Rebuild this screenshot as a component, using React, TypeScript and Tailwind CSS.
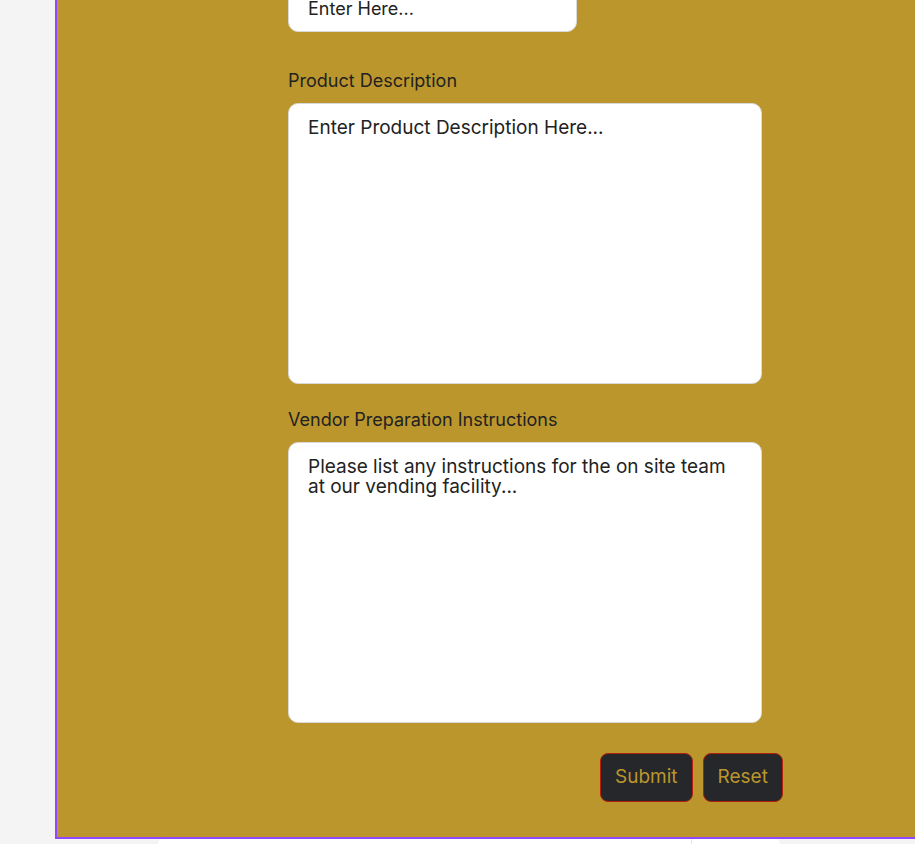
export default function App() {
  return (
    <div
      className="w-[915px] h-[844px] overflow-hidden bg-[#f4f4f4] flex"
      style={{ fontFamily: "Inter, 'Noto Sans', sans-serif" }}
    >
      <div className="w-[55px] shrink-0" />
      <div className="flex-1 flex flex-col">
        <div className="border-l-2 border-b-2 border-[#9147ff] bg-[#bb962c] pl-[231px] pb-[35px]">
          <form className="w-[474px] flex flex-col -mt-[15px]">
            <input
              type="text"
              placeholder="Enter Here..."
              className="w-[289px] h-[47px] rounded-[10px] border border-[#d9d9d9] bg-white px-[19px] text-[18px] text-[#222] placeholder:text-[#222] outline-none"
            />
            <label className="mt-[35px] text-[18px] leading-[27px] text-[#222]">Product Description</label>
            <textarea
              placeholder="Enter Product Description Here..."
              className="mt-[9px] h-[281px] resize-none rounded-[10px] border border-[#d9d9d9] bg-white px-[19px] pt-[14px] text-[19px] leading-[20px] text-[#222] placeholder:text-[#222] outline-none"
            />
            <label className="mt-[22px] text-[18px] leading-[27px] text-[#222]">Vendor Preparation Instructions</label>
            <textarea
              placeholder="Please list any instructions for the on site team at our vending facility..."
              className="mt-[9px] h-[281px] resize-none rounded-[10px] border border-[#d9d9d9] bg-white px-[19px] pt-[14px] text-[19px] leading-[20px] text-[#222] placeholder:text-[#222] outline-none"
            />
            <div className="mt-[30px] flex gap-[10px] pl-[312px]">
              <button
                type="submit"
                className="h-[49px] px-[14px] rounded-[8px] border border-[#b3200e] bg-[#25272a] text-[19px] text-[#bb962c] whitespace-nowrap"
              >
                Submit
              </button>
              <button
                type="reset"
                className="h-[49px] px-[14px] rounded-[8px] border border-[#b3200e] bg-[#25272a] text-[19px] text-[#bb962c] whitespace-nowrap"
              >
                Reset
              </button>
            </div>
          </form>
        </div>
        <div className="flex-1 flex pl-[103px] pr-[135px]">
          <div className="flex-1 bg-white rounded-t-[12px] flex justify-end pr-[88px]">
            <div className="w-px bg-[#e5e5e5]" />
          </div>
        </div>
      </div>
    </div>
  );
}
